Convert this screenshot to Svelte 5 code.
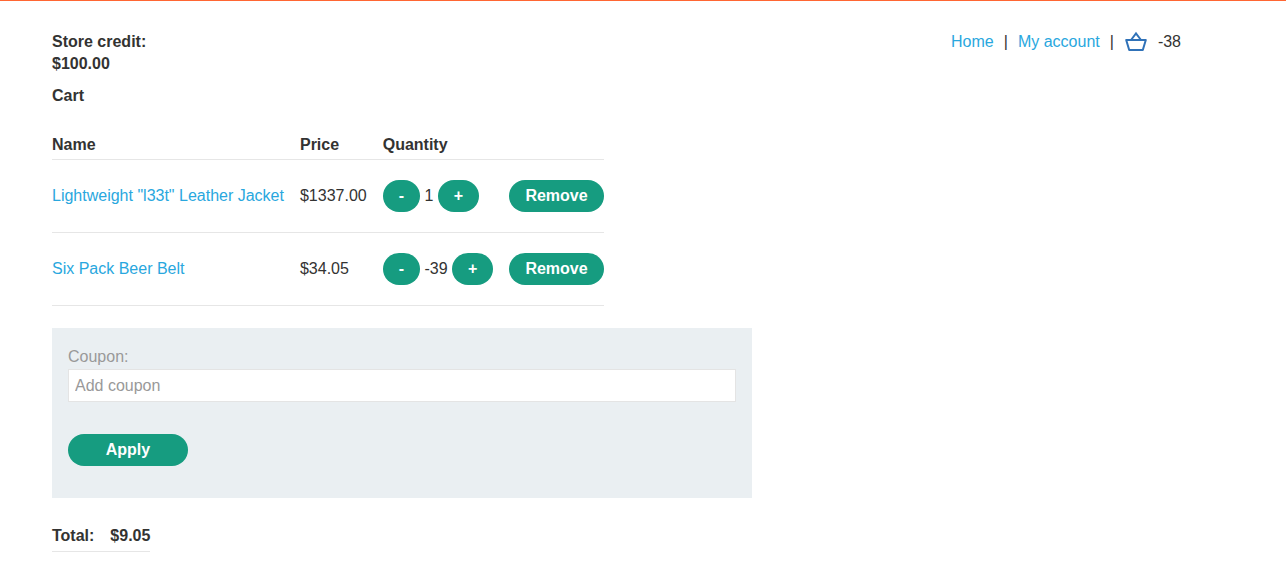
<script>
  let items = $state([
    { name: 'Lightweight "l33t" Leather Jacket', price: '$1337.00', quantity: 1 },
    { name: 'Six Pack Beer Belt', price: '$34.05', quantity: -39 }
  ]);
  let coupon = $state('');
  let count = $derived(items.reduce((sum, item) => sum + item.quantity, 0));

  function remove(item) {
    items = items.filter((other) => other !== item);
  }
</script>

<div class="page">
  <header>
    <div class="credit">
      <strong>Store credit:</strong>
      <strong>$100.00</strong>
    </div>
    <nav>
      <a href="#home">Home</a>
      <span>|</span>
      <a href="#account">My account</a>
      <span>|</span>
      <a class="basket" href="#cart" aria-label="Basket">
        <svg viewBox="0 0 24 22" width="24" height="22" fill="none" stroke="#3072b8" stroke-width="2">
          <path d="M2.2 9H21.8L18.8 19H5.2Z" stroke-linejoin="round" />
          <path d="M7 9L12 2.4L17 9" />
        </svg>
      </a>
      <span>{count}</span>
    </nav>
  </header>

  <main>
    <h1>Cart</h1>
    <table class="items">
      <thead>
        <tr><th>Name</th><th>Price</th><th>Quantity</th><th></th></tr>
      </thead>
      <tbody>
        {#each items as item}
          <tr>
            <td><a href="#product">{item.name}</a></td>
            <td>{item.price}</td>
            <td class="quantity">
              <button type="button" onclick={() => item.quantity--}>-</button>
              {item.quantity}
              <button type="button" onclick={() => item.quantity++}>+</button>
            </td>
            <td><button type="button" onclick={() => remove(item)}>Remove</button></td>
          </tr>
        {/each}
      </tbody>
    </table>

    <form onsubmit={(event) => event.preventDefault()}>
      <label for="coupon">Coupon:</label>
      <input id="coupon" type="text" placeholder="Add coupon" bind:value={coupon} />
      <button class="apply" type="submit">Apply</button>
    </form>

    <table class="total">
      <tbody>
        <tr><th scope="row">Total:</th><th>$9.05</th></tr>
      </tbody>
    </table>
  </main>
</div>

<style>
  :global(body) {
    margin: 0;
    background: #fff;
  }
  .page {
    border-top: 1px solid #ff6633;
    padding: 30px 105px 18px 52px;
    color: #333332;
    font: 16px/22px "Liberation Sans", Arial, sans-serif;
  }
  header {
    display: flex;
    justify-content: space-between;
    align-items: flex-start;
  }
  .credit {
    display: flex;
    flex-direction: column;
  }
  nav {
    display: flex;
    align-items: center;
    gap: 10px;
  }
  a {
    color: #29a7de;
    text-decoration: none;
  }
  .basket {
    display: flex;
  }
  h1 {
    margin: 10px 0 15px;
    font-size: 16px;
    line-height: 22px;
  }
  table {
    border-collapse: collapse;
  }
  th {
    text-align: left;
    padding: 12px 16px 4px 0;
    border-bottom: 1px solid #e6e6e6;
  }
  .items th {
    padding-bottom: 3px;
  }
  td {
    padding: 20px 16px 20px 0;
    border-bottom: 1px solid #e6e6e6;
  }
  th:last-child,
  td:last-child {
    padding-right: 0;
  }
  .quantity {
    white-space: nowrap;
  }
  button {
    height: 32px;
    padding: 0 16px;
    border: 0;
    border-radius: 16px;
    background: #169c80;
    color: #fff;
    font: bold 16px/32px "Liberation Sans", Arial, sans-serif;
    cursor: pointer;
  }
  form {
    box-sizing: border-box;
    max-width: 700px;
    margin: 22px 0 27px;
    padding: 18px 16px 32px;
    background: #eaeff2;
  }
  label {
    display: block;
    color: #999;
  }
  input {
    box-sizing: border-box;
    width: 100%;
    height: 33px;
    margin: 1px 0 32px;
    padding: 0 6px;
    display: block;
    border: 1px solid #e4e4e4;
    background: #fff;
    color: #333332;
    font: inherit;
  }
  input::placeholder {
    color: #999;
    opacity: 1;
  }
  .apply {
    display: block;
    min-width: 120px;
  }
  .total th {
    padding-top: 0;
  }
</style>
